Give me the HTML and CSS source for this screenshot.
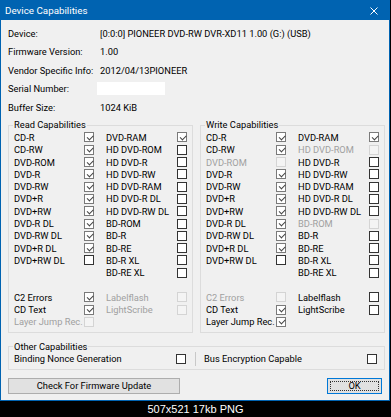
FILE: index.html
```html
<!DOCTYPE html>
<html>
<head>
    <meta charset="UTF-8">
    <title>Device Capabilities</title>
    <link rel="stylesheet" href="styles.css">
</head>
<body>
<div class="window">
    <div class="titlebar">
        <span>Device Capabilities</span>
        <svg class="close" width="8" height="8" viewBox="0 0 8 8">
            <path d="M0.5 0.5L7.5 7.5M7.5 0.5L0.5 7.5" stroke="#fff" stroke-width="1"/>
        </svg>
    </div>

    <div class="content">
        <div class="info">
            <span>Device:</span><span>[0:0:0] PIONEER DVD-RW DVR-XD11 1.00 (G:) (USB)</span>
            <span>Firmware Version:</span><span>1.00</span>
            <span>Vendor Specific Info:</span><span>2012/04/13PIONEER</span>
            <span>Serial Number:</span><span><i class="serial"></i></span>
            <span>Buffer Size:</span><span>1024 KiB</span>
        </div>

        <div class="groups">
            <fieldset class="group">
                <legend>Read Capabilities</legend>
                <div class="caps">
                    <span>CD-R</span><i class="cb on"></i><span class="c3">DVD-RAM</span><i class="cb on"></i>
                    <span>CD-RW</span><i class="cb on"></i><span class="c3">HD DVD-ROM</span><i class="cb"></i>
                    <span>DVD-ROM</span><i class="cb on"></i><span class="c3">HD DVD-R</span><i class="cb"></i>
                    <span>DVD-R</span><i class="cb on"></i><span class="c3">HD DVD-RW</span><i class="cb"></i>
                    <span>DVD-RW</span><i class="cb on"></i><span class="c3">HD DVD-RAM</span><i class="cb"></i>
                    <span>DVD+R</span><i class="cb on"></i><span class="c3">HD DVD-R DL</span><i class="cb"></i>
                    <span>DVD+RW</span><i class="cb on"></i><span class="c3">HD DVD-RW DL</span><i class="cb"></i>
                    <span>DVD-R DL</span><i class="cb on"></i><span class="c3">BD-ROM</span><i class="cb"></i>
                    <span>DVD-RW DL</span><i class="cb on"></i><span class="c3">BD-R</span><i class="cb"></i>
                    <span>DVD+R DL</span><i class="cb on"></i><span class="c3">BD-RE</span><i class="cb"></i>
                    <span>DVD+RW DL</span><i class="cb"></i><span class="c3">BD-R XL</span><i class="cb"></i>
                    <span class="c3">BD-RE XL</span><i class="cb"></i>
                    <div class="blank"></div>
                    <span>C2 Errors</span><i class="cb on"></i><span class="c3 dis">Labelflash</span><i class="cb dis"></i>
                    <span>CD Text</span><i class="cb on"></i><span class="c3 dis">LightScribe</span><i class="cb dis"></i>
                    <span class="dis">Layer Jump Rec.</span><i class="cb dis"></i>
                </div>
            </fieldset>

            <fieldset class="group">
                <legend>Write Capabilities</legend>
                <div class="caps">
                    <span>CD-R</span><i class="cb on"></i><span class="c3">DVD-RAM</span><i class="cb on"></i>
                    <span>CD-RW</span><i class="cb on"></i><span class="c3 dis">HD DVD-ROM</span><i class="cb dis"></i>
                    <span class="dis">DVD-ROM</span><i class="cb dis"></i><span class="c3">HD DVD-R</span><i class="cb"></i>
                    <span>DVD-R</span><i class="cb on"></i><span class="c3">HD DVD-RW</span><i class="cb"></i>
                    <span>DVD-RW</span><i class="cb on"></i><span class="c3">HD DVD-RAM</span><i class="cb"></i>
                    <span>DVD+R</span><i class="cb on"></i><span class="c3">HD DVD-R DL</span><i class="cb"></i>
                    <span>DVD+RW</span><i class="cb on"></i><span class="c3">HD DVD-RW DL</span><i class="cb"></i>
                    <span>DVD-R DL</span><i class="cb on"></i><span class="c3 dis">BD-ROM</span><i class="cb dis"></i>
                    <span>DVD-RW DL</span><i class="cb on"></i><span class="c3">BD-R</span><i class="cb"></i>
                    <span>DVD+R DL</span><i class="cb on"></i><span class="c3">BD-RE</span><i class="cb"></i>
                    <span>DVD+RW DL</span><i class="cb"></i><span class="c3">BD-R XL</span><i class="cb"></i>
                    <span class="c3">BD-RE XL</span><i class="cb"></i>
                    <div class="blank"></div>
                    <span class="dis">C2 Errors</span><i class="cb dis"></i><span class="c3">Labelflash</span><i class="cb"></i>
                    <span>CD Text</span><i class="cb on"></i><span class="c3">LightScribe</span><i class="cb"></i>
                    <span>Layer Jump Rec.</span><i class="cb on"></i>
                </div>
            </fieldset>
        </div>

        <fieldset class="group other">
            <legend>Other Capabilities</legend>
            <div class="other-row">
                <span>Binding Nonce Generation</span><i class="cb"></i>
                <i class="sep"></i>
                <span>Bus Encryption Capable</span><i class="cb"></i>
            </div>
        </fieldset>

        <div class="buttons">
            <button class="btn">Check For Firmware Update</button>
            <button class="btn ok">OK</button>
        </div>
    </div>
</div>
<div class="caption">507x521 17kb PNG</div>
</body>
</html>
```

FILE: styles.css
```css
* {
    margin: 0;
    padding: 0;
    box-sizing: border-box;
}

body {
    width: 391px;
    height: 417px;
    background: #000;
    font-family: Roboto, "Open Sans", sans-serif;
    font-size: 9.3px;
    color: #000;
    overflow: hidden;
}

.window {
    width: 390px;
    height: 401px;
    border: 1px solid #0063b1;
    background: #f0f0f0;
}

/*标题栏*/
.titlebar {
    display: flex;
    align-items: center;
    justify-content: space-between;
    height: 19px;
    padding: 0 11px 0 4px;
    background: #0063b1;
    color: #fff;
    font-size: 9.8px;
}

.content {
    padding: 4px 4px 0 7px;
}

.info {
    display: grid;
    grid-template-columns: 92px 1fr;
    grid-auto-rows: 18.5px;
    align-items: center;
    white-space: nowrap;
}

.serial {
    display: block;
    margin-left: -3px;
    width: 68px;
    height: 13px;
    background: #fff;
}

.groups {
    display: flex;
    gap: 7px;
    margin-top: 2.5px;
}

.group {
    flex: 0 0 185px;
    min-width: 0;
    padding: 0 5px 4px;
    border: 1px solid #dcdcdc;
}

.group legend {
    margin-left: -1px;
    padding: 0 1px;
    line-height: 12.3px;
}

.caps {
    display: grid;
    grid-template-columns: 70px 10px 83px 10px;
    grid-auto-rows: 12.3px;
    align-items: center;
    white-space: nowrap;
}

.caps .c3 {
    grid-column: 3;
    padding-left: 12px;
}

.caps .blank {
    grid-column: 1 / -1;
}

.dis {
    color: #a0a0a0;
}

/*复选框*/
.cb {
    position: relative;
    display: block;
    width: 10px;
    height: 10px;
    border: 1px solid #333;
    background: #fff;
}

.cb.on {
    border-color: #7a7a7a;
}

.cb.on::after {
    content: "";
    position: absolute;
    left: 1.5px;
    top: 1.5px;
    width: 5px;
    height: 2.5px;
    border-left: 1px solid #444;
    border-bottom: 1px solid #444;
    transform: rotate(-45deg);
}

.cb.dis {
    border-color: #d4d4d4;
    background: #f4f4f4;
}

.other {
    width: 377px;
    margin-top: 7.5px;
}

.other-row {
    display: grid;
    grid-template-columns: 162px 10px 18px 163px 10px;
    grid-auto-rows: 12.3px;
    align-items: center;
    white-space: nowrap;
}

.sep {
    justify-self: center;
    width: 1px;
    height: 14px;
    background: #c8c8c8;
}

.buttons {
    display: flex;
    justify-content: space-between;
    margin-top: 7.5px;
    padding-right: 3px;
}

.btn {
    width: 172px;
    height: 16px;
    border: 1px solid #adadad;
    background: #e1e1e1;
    font-family: inherit;
    font-size: 9.3px;
    color: #000;
    line-height: 14px;
}

.btn.ok {
    position: relative;
    width: 55px;
    border-color: #0078d7;
}

.btn.ok::after {
    content: "";
    position: absolute;
    left: 2px;
    top: 2px;
    right: 2px;
    bottom: 2px;
    border: 1px dotted #333;
}

.caption {
    height: 16px;
    line-height: 16px;
    text-align: center;
    font-family: "Liberation Sans", Arial, sans-serif;
    font-size: 11px;
    color: #fff;
}
```
